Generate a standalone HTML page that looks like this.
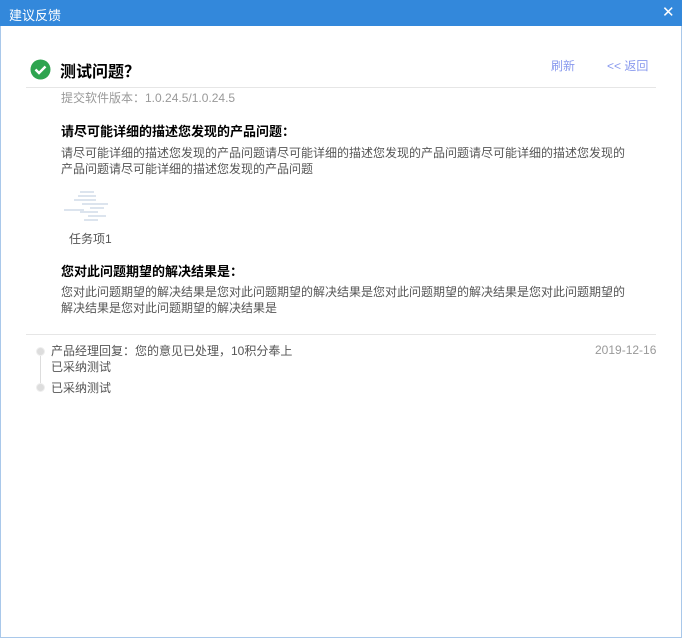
<!DOCTYPE html><html><head><meta charset="utf-8"><style>
body{margin:0;width:682px;height:638px;overflow:hidden;background:#fff;font-family:"Liberation Sans","Noto Sans CJK SC",sans-serif;font-size:12px;position:relative}
.a{position:absolute;white-space:nowrap}
#bar{left:0;top:0;width:682px;height:26px;background:#3388db}
#fr{left:0;top:26px;width:680px;height:611px;border:1px solid #a9c8ea;border-top:0}
.g{color:#999}.t{color:#555}
</style></head><body>
<div class="a" id="bar"></div><div class="a" id="fr"></div>
<div class="a" style="left:9px;top:5px;color:#fff;font-size:13px">建议反馈</div>
<div class="a" style="left:662px;top:3px;color:#fff;font-size:15px">✕</div>
<svg class="a" style="left:30px;top:59px" width="21" height="21"><circle cx="10.5" cy="10.5" r="10" fill="#2ea44f"/><path d="M5.5 10.5l3.5 3.5 6.5-6.5" stroke="#fff" stroke-width="2.4" fill="none"/></svg>
<div class="a" style="left:60px;top:58px;font-size:16px;font-weight:bold;color:#000">测试问题？</div>
<div class="a" style="left:551px;top:57px;color:#8899ee">刷新</div>
<div class="a" style="left:607px;top:57px;color:#8899ee">&lt;&lt; 返回</div>
<div class="a" style="left:26px;top:87px;width:630px;height:1px;background:#e6e6e6"></div>
<div class="a g" style="left:61px;top:89px">提交软件版本：1.0.24.5/1.0.24.5</div>
<div class="a" style="left:61px;top:121px;font-size:13px;font-weight:bold;color:#000">请尽可能详细的描述您发现的产品问题：</div>
<div class="a t" style="left:61px;top:145px;line-height:16px">请尽可能详细的描述您发现的产品问题请尽可能详细的描述您发现的产品问题请尽可能详细的描述您发现的<br>产品问题请尽可能详细的描述您发现的产品问题</div>
<svg class="a" style="left:60px;top:188px" width="60" height="36"><g stroke="#c8d4e4" stroke-width="1.2"><path d="M20 4h14M18 8h18M14 12h22M22 16h26M4 22h20M20 24h18M28 28h18M24 32h14M30 20h14"/></g></svg>
<div class="a t" style="left:69px;top:230px">任务项1</div>
<div class="a" style="left:61px;top:261px;font-size:13px;font-weight:bold;color:#000">您对此问题期望的解决结果是：</div>
<div class="a t" style="left:61px;top:284px;line-height:16px">您对此问题期望的解决结果是您对此问题期望的解决结果是您对此问题期望的解决结果是您对此问题期望的<br>解决结果是您对此问题期望的解决结果是</div>
<div class="a" style="left:26px;top:334px;width:630px;height:1px;background:#e6e6e6"></div>
<div class="a" style="left:40px;top:355px;width:1px;height:30px;background:#ddd"></div>
<div class="a" style="left:36px;top:347px;width:7px;height:7px;border-radius:50%;background:#ddd;border:1px solid #eee"></div>
<div class="a" style="left:36px;top:383px;width:7px;height:7px;border-radius:50%;background:#ddd;border:1px solid #eee"></div>
<div class="a t" style="left:51px;top:343px;line-height:16px">产品经理回复：您的意见已处理，10积分奉上<br>已采纳测试</div>
<div class="a t" style="left:51px;top:379px">已采纳测试</div>
<div class="a g" style="left:595px;top:343px">2019-12-16</div>
</body></html>
